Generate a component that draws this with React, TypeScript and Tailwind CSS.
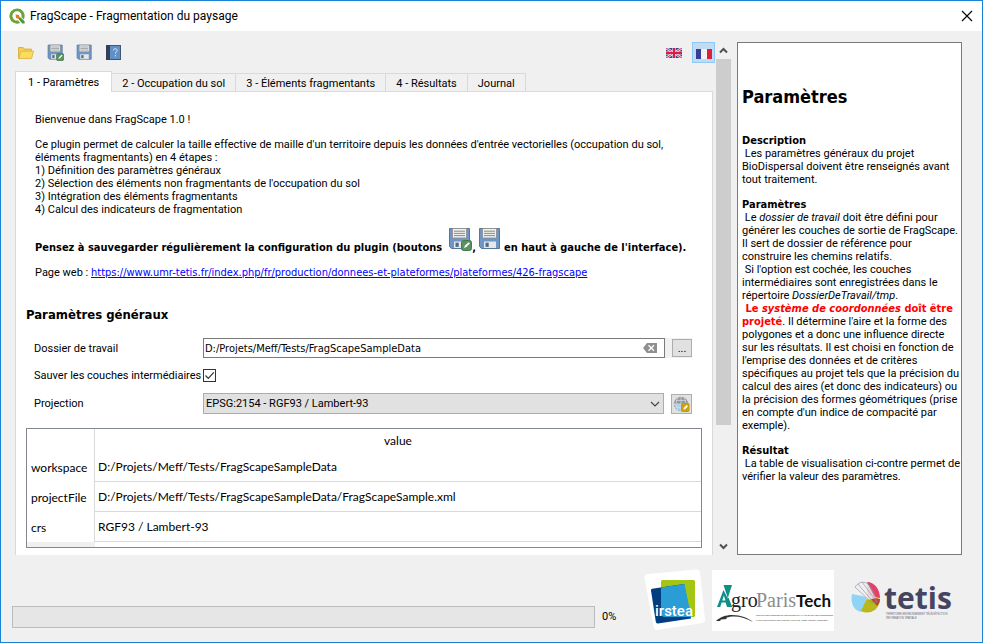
import type { ReactNode } from "react";

const HELP_LINK =
  "https://www.umr-tetis.fr/index.php/fr/production/donnees-et-plateformes/plateformes/426-fragscape";

function QgisLogo() {
  return (
    <svg width="16" height="16" viewBox="0 0 16 16" aria-hidden="true">
      <path
        d="M8 0.4a7.6 7.6 0 1 0 3.2 14.5l-2.1-2.5a4.6 4.6 0 1 1 3.3-3.2l2.4 2.3A7.6 7.6 0 0 0 8 0.4z"
        fill="#6aa53b"
      />
      <path d="M8.6 8.2l1.2 3 3.4 4.2h2.4v-2.2l-3.8-3.4z" fill="#4c9a2f" />
      <path d="M6.6 6.4l3.2.5 1 2.6-1.4 1.3-2.4-.8z" fill="#ee7913" />
    </svg>
  );
}

function FolderIcon() {
  return (
    <svg width="16" height="14" viewBox="0 0 16 14" aria-hidden="true">
      <path d="M0.5 12.5V1.5h4.6l1.2 1.6h7.2v2" fill="#f5cf4e" stroke="#d9b444" />
      <path d="M0.7 12.6L3 5.2h12.5l-2 7.4z" fill="#fcdc5e" stroke="#deb94a" strokeLinejoin="round" />
    </svg>
  );
}

function FloppyIcon({ size, edit = false }: { size: number; edit?: boolean }) {
  return (
    <svg width={size} height={size} viewBox="0 0 24 24" aria-hidden="true" className="shrink-0">
      <path d="M1.500 1.500h20v20H3.5l-2-2z" fill="#6d97c8" stroke="#5a7797" />
      <rect x="4.5" y="1.5" width="14" height="9.500" fill="#efefed" stroke="#8d8d8a" strokeWidth="0.8" />
      <path d="M6 4.2h11M6 6.4h11M6 8.6h11" stroke="#8b8b88" />
      <rect x="6" y="14.500" width="12" height="6.5" fill="#e7e7e5" />
      <rect x="7.5" y="15.7" width="3.2" height="4.2" fill="#4f6b8c" />
      {edit && (
        <g>
          <rect x="13.5" y="13.5" width="10" height="10" rx="2" fill="#5a9160" stroke="#477a4e" />
          <path d="M16 21l1-2.4 3.6-3.4 1.3 1.2-3.5 3.6z" fill="#fff" />
        </g>
      )}
    </svg>
  );
}

function BookIcon() {
  return (
    <svg width="15" height="15" viewBox="0 0 15 15" aria-hidden="true">
      <rect x="0.5" y="0.5" width="14" height="14" fill="#6090c6" stroke="#43586e" />
      <rect x="0" y="0" width="4" height="15" fill="#2f4257" />
      <path d="M7.5 5.400c0-2.200 3.600-2.200 3.600 0 0 1.500-1.700 1.600-1.700 3.300" fill="none" stroke="#e6eef7" />
      <rect x="8.9" y="10.2" width="1.1" height="1.2" fill="#e6eef7" />
    </svg>
  );
}

function UkFlag() {
  return (
    <svg width="16" height="10" viewBox="0 0 16 10" aria-hidden="true">
      <rect width="16" height="10" fill="#3b4496" />
      <path d="M0 0l16 10M16 0L0 10" stroke="#e8e4f0" strokeWidth="2.4" />
      <path d="M0 0l16 10M16 0L0 10" stroke="#d4304f" strokeWidth="1" />
      <path d="M8 0v10M0 5h16" stroke="#f0dde6" strokeWidth="3.2" />
      <path d="M8 0v10M0 5h16" stroke="#d81f43" strokeWidth="2" />
    </svg>
  );
}

function FrenchFlag() {
  return (
    <svg width="16" height="10" viewBox="0 0 16 10" aria-hidden="true">
      <rect width="5" height="10" fill="#353f98" />
      <rect x="5" width="6" height="10" fill="#f1f1f1" />
      <rect x="11" width="5" height="10" fill="#dc1f3a" />
    </svg>
  );
}

function GlobeIcon() {
  return (
    <svg width="17" height="16" viewBox="0 0 17 16" aria-hidden="true">
      <circle cx="8" cy="8" r="6.8" fill="#a9d2f2" stroke="#9aa3aa" strokeDasharray="2 1" />
      <path d="M1 8a7 7 0 0 1 14 0z" fill="#959a9e" />
      <path
        d="M8 1v14M1 8h14M3 4.500h10M3 11.500h10M4.8 1.8c-2 4-2 8 0 12M11.2 1.8c2 4 2 8 0 12"
        stroke="#d5dde3"
        strokeWidth="0.7"
        fill="none"
      />
      <rect x="8.500" y="7.500" width="7.500" height="8" rx="1" fill="#cfa10c" stroke="#c49a10" />
      <path d="M10.300 13.800l.8-2.200 2.700-2.500 1.200 1.200-2.600 2.800z" fill="#fff" />
    </svg>
  );
}

function IrsteaLogo() {
  return (
    <svg width="62" height="62" viewBox="0 0 62 62" role="img" aria-label="irstea">
      <path d="M4 5L53 0.5a3 3 0 0 1 3 2.500l5 48a3 3 0 0 1-2.500 3L13 61a3 3 0 0 1-3.300-2.400L0.500 9A3.500 3.500 0 0 1 4 5z" fill="#fff" />
      <rect x="17" y="11" width="34" height="37" rx="1.500" fill="#a3c614" />
      <path d="M7 21.500a1.500 1.500 0 0 1 1.200-1.700L40 15l7 34.500-33 5a2 2 0 0 1-2.200-1.700z" fill="#003e80" />
      <path d="M17 18.500L40.500 15l6.700 33H21a4 4 0 0 1-4-4z" fill="#2a9dd6" />
      <text x="11" y="47" fill="#fff" fontSize="15" fontFamily="Roboto, sans-serif" fontWeight="500">irstea</text>
    </svg>
  );
}

function AgroLogo() {
  return (
    <svg width="122" height="61" viewBox="0 0 122 61" role="img" aria-label="AgroParisTech">
      <rect width="122" height="61" fill="#fff" />
      <path d="M11.500 15h8.500l-4.200 13z" fill="#0f8f88" />
      <path d="M11.500 20L5 37h3.200l1.400-4.500h4L15 37h5.200l-3.700-9.500-.7.900z" fill="#0f8f88" />
      <path d="M10.300 30.500l1.600-5 1.600 5z" fill="#fff" />
      <path d="M4 51c4-4 10-6 16-6 9 0 16 3 21 7-7-4-14-6-21-5.500-3 .2-5 1-6 1.500l1 1-6 .5-1 1.500z" fill="#333" />
      <g fontFamily="'Liberation Serif', serif" fontSize="20">
        <text x="19" y="37" fill="#222">gro</text>
        <text x="44" y="37" fill="#8c8c8c">Paris</text>
      </g>
      <text x="84" y="37" fill="#111" fontFamily="Lato, sans-serif" fontSize="17" fontWeight="700">Tech</text>
      <g fontFamily="'Liberation Sans', sans-serif" fontSize="2" fill="#333">
        <text x="44" y="46">INSTITUT DES SCIENCES ET INDUSTRIES DU VIVANT ET DE L'ENVIRONNEMENT</text>
        <text x="44" y="51">PARIS INSTITUTE OF TECHNOLOGY FOR LIFE, FOOD AND ENV. SCIENCES</text>
      </g>
    </svg>
  );
}

function TetisLogo() {
  return (
    <svg width="104" height="50" viewBox="0 -8 104 50" role="img" aria-label="tetis">
      <path d="M16 17L1 14C-1 25 4 31 11 32z" fill="#8fd3f5" />
      <path d="M17 16L10 31c8 4 18 0 19-12z" fill="#b9b81a" />
      <path d="M16 16L16 2c8 0 13 8 13 16z" fill="#e4406a" />
      <path d="M18 17l11 2c0 4-2 6-3 7z" fill="#c0442e" />
      <path d="M4 7c3-4 8-6 12-5l9 16-8 2z" fill="#efeff0" fillOpacity="0.85" />
      <path
        d="M4 7c4-6 10-6 14-2l8 17M4 7l17 16 5-1M7 4l15 18M11 2l14 19M16 2l8 12"
        stroke="#8a8a9c"
        strokeWidth="0.600"
        fill="none"
      />
      <text x="33" y="29" fill="#454562" fontFamily="'Open Sans', sans-serif" fontSize="30" fontWeight="700">tetis</text>
      <g fontFamily="'Liberation Sans', sans-serif" fontSize="2.600" fill="#66677c">
        <text x="35" y="35">TERRITOIRE ENVIRONNEMENT TÉLÉDÉTECTION</text>
        <text x="35" y="39">INFORMATION SPATIALE</text>
      </g>
    </svg>
  );
}

function ToolButton({ label, children }: { label: string; children: ReactNode }) {
  return (
    <button type="button" aria-label={label} className="flex h-[21px] w-[22px] items-center justify-center">
      {children}
    </button>
  );
}

function Toolbar() {
  return (
    <div className="flex h-[21px] shrink-0 items-center gap-[7px]">
      <ToolButton label="Ouvrir"><FolderIcon /></ToolButton>
      <ToolButton label="Enregistrer sous"><FloppyIcon size={17} edit /></ToolButton>
      <ToolButton label="Enregistrer"><FloppyIcon size={17} /></ToolButton>
      <ToolButton label="Aide"><BookIcon /></ToolButton>
      <div className="ml-auto flex gap-[7px] pr-px">
        <ToolButton label="English"><UkFlag /></ToolButton>
        <button
          type="button"
          aria-label="Français"
          aria-pressed="true"
          className="flex h-[21px] w-[23px] items-center justify-center border border-[#90c8f6] bg-[#c0dcf3] pt-[2px]"
        >
          <FrenchFlag />
        </button>
      </div>
    </div>
  );
}

const TABS = ["2 - Occupation du sol", "3 - Éléments fragmentants", "4 - Résultats", "Journal"];

function Tabs() {
  return (
    <div role="tablist" className="mt-2 flex h-5 shrink-0 items-end">
      <button
        type="button"
        role="tab"
        aria-selected="true"
        className="z-10 -mb-px h-[21px] border border-b-0 border-[#d9d9d9] bg-white px-3 leading-[13px]"
      >
        1 - Paramètres
      </button>
      {TABS.map((tab) => (
        <button
          key={tab}
          type="button"
          role="tab"
          aria-selected="false"
          className="h-[18px] border-t border-r border-[#d9d9d9] px-[10px] pt-px leading-[13px]"
        >
          {tab}
        </button>
      ))}
    </div>
  );
}

function Intro() {
  return (
    <div className="pl-[9px] leading-[13px] whitespace-nowrap">
      <p>Bienvenue dans FragScape 1.0 !</p>
      <p className="mt-3">
        Ce plugin permet de calculer la taille effective de maille d'un territoire depuis les données d'entrée
        vectorielles (occupation du sol,
        <br />
        éléments fragmentants) en 4 étapes :
      </p>
      <p>1) Définition des paramètres généraux</p>
      <p>2) Sélection des éléments non fragmentants de l'occupation du sol</p>
      <p>3) Intégration des éléments fragmentants</p>
      <p>4) Calcul des indicateurs de fragmentation</p>
      <p className="mt-[11px] flex h-[27px] items-end font-['DejaVu_Sans_Condensed','DejaVu_Sans',sans-serif] font-bold">
        <span>Pensez à sauvegarder régulièrement la configuration du plugin (boutons</span>
        <span className="mb-[3px] ml-[6px]"><FloppyIcon size={24} edit /></span>
        <span>,</span>
        <span className="mb-[3px] ml-[2px]"><FloppyIcon size={24} /></span>
        <span className="ml-[2px]">en haut à gauche de l'interface).</span>
      </p>
      <p className="mt-3">
        Page web :{" "}
        <a
          href={HELP_LINK}
          className="font-['DejaVu_Sans_Condensed','DejaVu_Sans',sans-serif] text-[#0000ff] underline"
        >
          {HELP_LINK}
        </a>
      </p>
    </div>
  );
}

function SettingsForm() {
  return (
    <form className="mt-[15px] flex flex-col gap-[9px] pr-[10px] pl-2">
      <div className="flex h-5 items-center">
        <label htmlFor="folder" className="w-[169px] pt-[2px]">Dossier de travail</label>
        <div className="flex h-5 flex-1 items-center border border-[#7a7a7a] bg-white pr-[7px]">
          <input
            id="folder"
            type="text"
            defaultValue="D:/Projets/Meff/Tests/FragScapeSampleData"
            className="h-full min-w-0 flex-1 px-px pt-px font-['DejaVu_Sans_Condensed','DejaVu_Sans',sans-serif] outline-none"
          />
          <button type="button" aria-label="Effacer">
            <svg width="14" height="10" viewBox="0 0 14 10" aria-hidden="true">
              <path d="M4 0h10v10H4L0 5z" fill="#8f8f8f" />
              <path d="M5.500 2.200l5.500 5.600M11 2.200L5.500 7.800" stroke="#fff" strokeWidth="1.300" />
            </svg>
          </button>
        </div>
        <div className="flex h-5 items-center bg-[#f0f0f0] pl-[7px]">
          <button type="button" aria-label="Parcourir" className="h-[18px] w-5 border border-[#adadad] bg-[#e1e1e1] leading-[13px]">
            ...
          </button>
        </div>
      </div>
      <div className="flex h-[17px] items-center">
        <label htmlFor="save-layers" className="w-[169px] pt-[2px] whitespace-nowrap">
          Sauver les couches intermédiaires
        </label>
        <span className="grid">
          <input
            id="save-layers"
            type="checkbox"
            defaultChecked
            className="peer col-start-1 row-start-1 h-[13px] w-[13px] appearance-none border border-[#333] bg-white"
          />
          <svg
            className="pointer-events-none invisible col-start-1 row-start-1 peer-checked:visible"
            width="13"
            height="13"
            viewBox="0 0 13 13"
            aria-hidden="true"
          >
            <path d="M2.500 6.500l2.800 2.800 5.500-6" fill="none" stroke="#333" strokeWidth="1.200" />
          </svg>
        </span>
      </div>
      <div className="flex h-[21px] items-center">
        <label htmlFor="projection" className="w-[169px] pt-[2px]">Projection</label>
        <div className="grid flex-1">
          <select
            id="projection"
            className="col-start-1 row-start-1 h-[21px] appearance-none border border-[#adadad] bg-[#e1e1e1] px-[2px] pt-px"
          >
            <option>EPSG:2154 - RGF93 / Lambert-93</option>
          </select>
          <svg
            className="pointer-events-none col-start-1 row-start-1 mr-1 self-center justify-self-end"
            width="10"
            height="6"
            viewBox="0 0 10 6"
            aria-hidden="true"
          >
            <path d="M1 1l4 4 4-4" fill="none" stroke="#444" strokeWidth="1.200" />
          </svg>
        </div>
        <button
          type="button"
          aria-label="Choisir la projection"
          className="ml-[7px] flex h-5 w-[21px] items-center justify-center border border-[#adadad] bg-[#e1e1e1]"
        >
          <GlobeIcon />
        </button>
      </div>
    </form>
  );
}

const ROWS = [
  ["workspace", "D:/Projets/Meff/Tests/FragScapeSampleData"],
  ["projectFile", "D:/Projets/Meff/Tests/FragScapeSampleData/FragScapeSample.xml"],
  ["crs", "RGF93 / Lambert-93"],
];

function ValueTable() {
  return (
    <div className="mt-[14px] h-[120px] overflow-hidden border border-[#828790] font-[Lato,sans-serif] text-[12px]">
      <table className="w-full border-separate border-spacing-0">
        <thead>
          <tr className="h-[23px]">
            <th className="w-[68px] border-r border-[#d9d9d9] p-0" />
            <th className="p-0 font-normal">value</th>
          </tr>
        </thead>
        <tbody>
          {ROWS.map(([name, value]) => (
            <tr key={name} className="h-[30px]">
              <th className="border-r border-[#d9d9d9] p-0 pt-[2px] pl-1 text-left font-normal">{name}</th>
              <td className="border-b border-[#d9d9d9] p-0 pl-[3px]">{value}</td>
            </tr>
          ))}
          <tr className="h-[30px]">
            <th className="bg-[#f0f0f0] p-0" />
            <td className="p-0" />
          </tr>
        </tbody>
      </table>
    </div>
  );
}

function ScrollBar() {
  return (
    <div className="flex w-[15px] shrink-0 flex-col">
      <div className="flex h-[17px] items-center justify-center">
        <svg width="9" height="7" viewBox="0 0 9 7" aria-hidden="true">
          <path d="M1 5.500l3.500-3.500L8 5.500" fill="none" stroke="#505050" strokeWidth="2" />
        </svg>
      </div>
      <div className="flex-1">
        <div className="h-[76.5%] bg-[#cdcdcd]" />
      </div>
      <div className="flex h-[17px] items-center justify-center">
        <svg width="9" height="7" viewBox="0 0 9 7" aria-hidden="true">
          <path d="M1 1.500L4.500 5 8 1.500" fill="none" stroke="#505050" strokeWidth="2" />
        </svg>
      </div>
    </div>
  );
}

function HelpPanel() {
  return (
    <aside className="ml-[6px] w-[225px] shrink-0 overflow-hidden border border-[#7a7a7a] bg-white px-1 leading-[13px] whitespace-nowrap [&_b]:font-['DejaVu_Sans_Condensed','DejaVu_Sans',sans-serif] [&_h1]:font-['DejaVu_Sans_Condensed','DejaVu_Sans',sans-serif] [&_h2]:font-['DejaVu_Sans_Condensed','DejaVu_Sans',sans-serif]">
      <h1 className="mt-[43px] text-[18px] leading-[22px] font-bold">Paramètres</h1>
      <h2 className="mt-[26px] font-bold">Description</h2>
      <p>
        &nbsp;Les paramètres généraux du projet
        <br />
        BioDispersal doivent être renseignés avant
        <br />
        tout traitement.
      </p>
      <h2 className="mt-3 font-bold">Paramètres</h2>
      <p>
        &nbsp;Le <i>dossier de travail</i> doit être défini pour
        <br />
        générer les couches de sortie de FragScape.
        <br />
        Il sert de dossier de référence pour
        <br />
        construire les chemins relatifs.
        <br />
        &nbsp;Si l'option est cochée, les couches
        <br />
        intermédiaires sont enregistrées dans le
        <br />
        répertoire <i>DossierDeTravail/tmp</i>.
        <br />
        <b className="text-[#ff0000]">
          &nbsp;Le <i>système de coordonnées</i> doît être
          <br />
          projeté
        </b>
        . Il détermine l'aire et la forme des
        <br />
        polygones et a donc une influence directe
        <br />
        sur les résultats. Il est choisi en fonction de
        <br />
        l'emprise des données et de critères
        <br />
        spécifiques au projet tels que la précision du
        <br />
        calcul des aires (et donc des indicateurs) ou
        <br />
        la précision des formes géométriques (prise
        <br />
        en compte d'un indice de compacité par
        <br />
        exemple).
      </p>
      <h2 className="mt-3 font-bold">Résultat</h2>
      <p>
        &nbsp;La table de visualisation ci-contre permet de
        <br />
        vérifier la valeur des paramètres.
      </p>
    </aside>
  );
}

export default function App() {
  return (
    <div className="flex h-screen flex-col border border-[#1883d7] bg-[#f0f0f0] font-[Roboto,sans-serif] text-[11px] text-black">
      <header className="flex h-[30px] shrink-0 items-center bg-white pr-[9px] pl-2 text-[12px]">
        <QgisLogo />
        <span className="ml-[5px]">FragScape - Fragmentation du paysage</span>
        <button type="button" aria-label="Fermer" className="ml-auto">
          <svg width="12" height="12" viewBox="0 0 12 12" aria-hidden="true">
            <path d="M1 1l10 10M11 1L1 11" stroke="#000" strokeWidth="1.100" />
          </svg>
        </button>
      </header>

      <main className="flex min-h-0 flex-1 pt-[11px] pr-5 pl-[14px]">
        <div className="flex min-w-0 flex-1 flex-col overflow-hidden">
          <Toolbar />
          <Tabs />
          <section className="mr-[3px] min-h-0 flex-1 overflow-hidden border border-b-0 border-[#d9d9d9] bg-white px-[10px] pt-[21px]">
            <Intro />
            <h2 className="mt-7 font-['DejaVu_Sans_Condensed','DejaVu_Sans',sans-serif] text-[13px] leading-4 font-bold">
              Paramètres généraux
            </h2>
            <SettingsForm />
            <ValueTable />
          </section>
        </div>
        <ScrollBar />
        <HelpPanel />
      </main>

      <footer className="flex h-[87px] shrink-0 items-end pr-[27px] pb-[11px] pl-[11px]">
        <progress
          value={0}
          max={100}
          aria-label="Progression"
          className="mb-[3px] h-[22px] min-w-0 flex-1 appearance-none border border-[#bcbcbc] [&::-webkit-progress-bar]:bg-[#e6e6e6]"
        />
        <span className="mb-2 ml-[7px] w-[42px] leading-[13px]">0%</span>
        <IrsteaLogo />
        <div className="ml-[6px]"><AgroLogo /></div>
        <div className="mb-[9px] ml-[17px]"><TetisLogo /></div>
      </footer>
    </div>
  );
}
